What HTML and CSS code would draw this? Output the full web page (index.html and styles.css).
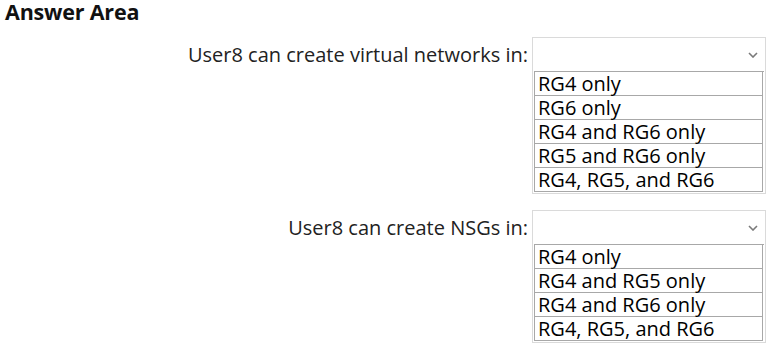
FILE: index.html
```html
<!DOCTYPE html>
<html lang="en">
<head>
	<meta charset="UTF-8">
	<title>Answer Area</title>
	<link rel="stylesheet" href="styles.css">
</head>
<body>
<div class="area">
	<h1 class="title">Answer Area</h1>
	<div class="rows">
		<div class="row">
			<div class="label">User8 can create virtual networks in:</div>
			<div class="box">
				<div class="select">
					<svg class="chev" width="10" height="6" viewBox="0 0 10 6"><polyline points="1,1 5,5 9,1" fill="none" stroke="#7a7a7a" stroke-width="1.6"/></svg>
				</div>
				<ul class="opts">
					<li>RG4 only</li>
					<li>RG6 only</li>
					<li>RG4 and RG6 only</li>
					<li>RG5 and RG6 only</li>
					<li>RG4, RG5, and RG6</li>
				</ul>
			</div>
		</div>
		<div class="row">
			<div class="label">User8 can create NSGs in:</div>
			<div class="box">
				<div class="select">
					<svg class="chev" width="10" height="6" viewBox="0 0 10 6"><polyline points="1,1 5,5 9,1" fill="none" stroke="#7a7a7a" stroke-width="1.6"/></svg>
				</div>
				<ul class="opts">
					<li>RG4 only</li>
					<li>RG4 and RG5 only</li>
					<li>RG4 and RG6 only</li>
					<li>RG4, RG5, and RG6</li>
				</ul>
			</div>
		</div>
	</div>
</div>
</body>
</html>
```

FILE: styles.css
```css
body,h1,ul,li {margin:0; padding:0;}
body {background:#fff; font-family:"Open Sans", "Noto Sans", Arial, sans-serif; color:#1a1a1a;}

.area {padding:0 3px 0 5px;}
.title {font:700 21.5px/28px "Open Sans", Arial, sans-serif; color:#111; height:37px; letter-spacing:-0.2px; margin-top:-2px; margin-bottom:2px;}

.rows {display:flex; flex-direction:column; gap:16px;}
.row {display:grid; grid-template-columns:1fr 234px; column-gap:4px; align-items:start;}
.label {height:34px; line-height:34px; text-align:right; font-size:20px; color:#222; padding-top:1px;}

.box {border:1px solid #dadada; padding:0 1px 1px 1px;}
.select {height:33px; display:flex; align-items:center; justify-content:flex-end; padding-right:6px;}
.opts {list-style:none; border-top:1px solid #a8a8a8;}
.opts li {line-height:23px; border:1px solid #a8a8a8; border-top:none; margin:0 1px 0 0; padding-left:3px; font-size:20px; color:#000; white-space:nowrap;}
```
